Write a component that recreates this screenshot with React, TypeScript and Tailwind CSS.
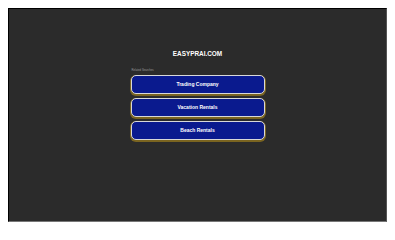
const searches = ["Trading Company", "Vacation Rentals", "Beach Rentals"]

export default function App() {
  return (
    <div className="w-[395px] h-[230px] bg-white p-2 font-['Liberation_Sans',Arial,sans-serif]">
      <div className="h-[214px] w-[379px] bg-[#2b2b2b] border border-t-black border-l-black border-r-[#555] border-b-[#777]">
        <div className="w-[134px] mx-auto pt-[40px]">
          <h1 className="text-center text-white font-bold text-[6.4px] leading-[10px]">EASYPRAI.COM</h1>
          <p className="mt-[9px] text-[#9a9a9a] text-[2.8px] leading-[4px] pl-[1px]">Related Searches</p>
          <div className="mt-[3px] flex flex-col gap-[4px]">
            {searches.map(s => (
              <div
                key={s}
                className="h-[19px] rounded-[5px] bg-[#0a1a8e] border border-[#d8d8d8] shadow-[0_1px_0_1px_#7a6420] flex items-center justify-center text-white font-bold text-[5px]"
              >
                {s}
              </div>
            ))}
          </div>
        </div>
      </div>
    </div>
  )
}
